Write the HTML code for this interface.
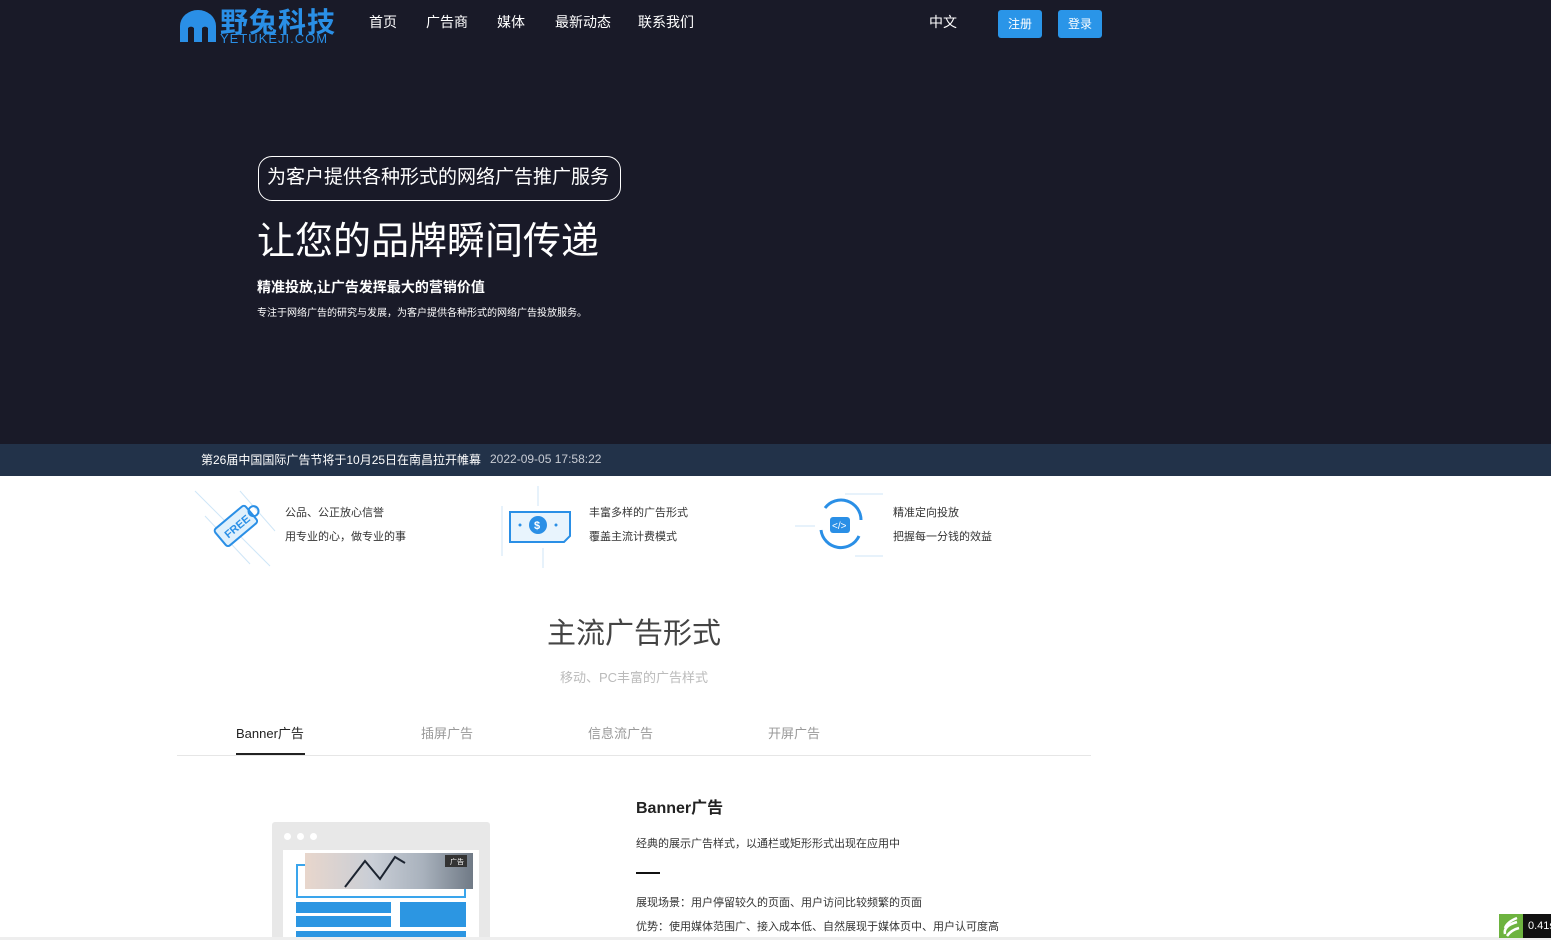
<!DOCTYPE html>
<html><head><meta charset="utf-8">
<style>
*{margin:0;padding:0;box-sizing:border-box}
body{width:1551px;height:940px;overflow:hidden;background:#fff;font-family:"Liberation Sans","Noto Sans CJK SC",sans-serif;position:relative}
.hero{position:absolute;left:0;top:0;width:1551px;height:444px;background:#191a28}
.abs{position:absolute;white-space:nowrap}
.nav a{position:absolute;top:12px;color:#fff;font-size:14px;text-decoration:none}
.btn{position:absolute;top:10px;width:44px;height:28px;background:#2a95e8;border-radius:3px;color:#fff;font-size:12px;text-align:center;line-height:28px}
.ticker{position:absolute;left:0;top:444px;width:1551px;height:32px;background:#223249}
.ft{font-size:11px;color:#333}
</style></head><body>
<div class="hero">
  <svg class="abs" style="left:178px;top:6px" width="40" height="36" viewBox="0 0 40 36"><path d="M2 36 V20 A18 16 0 0 1 38 20 V36 H30 V22 A4 4 0 0 0 24 22 V36 H16 V22 A4 4 0 0 0 10 22 V36Z" fill="#2a8fe6"/></svg>
  <div class="abs" style="left:220px;top:1px;font-size:28px;color:#2a8fe6;font-weight:bold;letter-spacing:1px">野兔科技</div>
  <div class="abs" style="left:220px;top:32px;font-size:13px;color:#2a8fe6;letter-spacing:1px;height:11px;overflow:hidden;line-height:14px">YETUKEJI.COM</div>
  <div class="nav">
    <a style="left:369px">首页</a><a style="left:426px">广告商</a><a style="left:497px">媒体</a><a style="left:555px">最新动态</a><a style="left:638px">联系我们</a><a style="left:929px">中文</a>
  </div>
  <div class="btn" style="left:998px">注册</div>
  <div class="btn" style="left:1058px">登录</div>
  <div class="abs" style="left:258px;top:156px;width:363px;height:45px;border:1px solid #fff;border-radius:14px;color:#fff;font-size:19px;line-height:41px;padding-left:8px">为客户提供各种形式的网络广告推广服务</div>
  <div class="abs" style="left:257px;top:210px;color:#fff;font-size:38px">让您的品牌瞬间传递</div>
  <div class="abs" style="left:257px;top:277px;color:#fff;font-size:14px;font-weight:bold">精准投放,让广告发挥最大的营销价值</div>
  <div class="abs" style="left:257px;top:304px;color:#fff;font-size:10px">专注于网络广告的研究与发展，为客户提供各种形式的网络广告投放服务。</div>
</div>
<div class="ticker">
  <div class="abs" style="left:201px;top:7px;color:#fff;font-size:12px">第26届中国国际广告节将于10月25日在南昌拉开帷幕</div>
  <div class="abs" style="left:490px;top:8px;color:#c8ccd4;font-size:12px">2022-09-05 17:58:22</div>
</div>
<svg class="abs" style="left:190px;top:486px" width="90" height="82" viewBox="0 0 90 82">
  <g stroke="#cfe6f7" stroke-width="1"><line x1="5" y1="5" x2="80" y2="80"/><line x1="15" y1="30" x2="60" y2="78"/><line x1="50" y1="5" x2="85" y2="45"/></g>
  <g transform="rotate(-40 45 42)"><rect x="27" y="30" width="40" height="22" rx="3" fill="#dff0fc" stroke="#2a8fe6" stroke-width="2"/><text x="33" y="46" font-size="11" font-weight="bold" fill="#2a8fe6" font-family="Liberation Sans">FREE</text><circle cx="70" cy="41" r="5" fill="none" stroke="#2a8fe6" stroke-width="2"/></g>
</svg>
<div class="abs ft" style="left:285px;top:504px">公品、公正放心信誉</div>
<div class="abs ft" style="left:285px;top:528px">用专业的心，做专业的事</div>
<svg class="abs" style="left:498px;top:486px" width="80" height="82" viewBox="0 0 80 82">
  <g stroke="#cfe6f7"><line x1="40" y1="0" x2="40" y2="20"/><line x1="45" y1="62" x2="45" y2="82"/><line x1="4" y1="20" x2="4" y2="70"/></g>
  <path d="M12 26 H72 V50 L66 56 H12Z" fill="#e8f4fd" stroke="#2a8fe6" stroke-width="2"/>
  <circle cx="40" cy="39" r="9" fill="#2a8fe6"/><text x="36" y="43" font-size="11" fill="#fff" font-weight="bold" font-family="Liberation Sans">$</text>
  <circle cx="22" cy="39" r="1.5" fill="#2a8fe6"/><circle cx="58" cy="39" r="1.5" fill="#2a8fe6"/>
</svg>
<div class="abs ft" style="left:589px;top:504px">丰富多样的广告形式</div>
<div class="abs ft" style="left:589px;top:528px">覆盖主流计费模式</div>
<svg class="abs" style="left:795px;top:486px" width="90" height="82" viewBox="0 0 90 82">
  <g stroke="#cfe6f7"><line x1="50" y1="8" x2="88" y2="8"/><line x1="0" y1="40" x2="20" y2="40"/><line x1="60" y1="70" x2="88" y2="70"/></g>
  <path d="M30 22 A20 20 0 0 1 66 34" fill="none" stroke="#2a8fe6" stroke-width="3"/>
  <path d="M64 50 A20 20 0 0 1 26 44" fill="none" stroke="#2a8fe6" stroke-width="3"/>
  <rect x="35" y="31" width="20" height="16" rx="3" fill="#2a8fe6"/><text x="37" y="43" font-size="10" fill="#fff" font-family="Liberation Sans">&lt;/&gt;</text>
</svg>
<div class="abs ft" style="left:893px;top:504px">精准定向投放</div>
<div class="abs ft" style="left:893px;top:528px">把握每一分钱的效益</div>
<div class="abs" style="left:547px;top:610px;font-size:29px;color:#444">主流广告形式</div>
<div class="abs" style="left:560px;top:667px;font-size:13px;color:#bbb">移动、PC丰富的广告样式</div>
<div class="abs" style="left:236px;top:723px;font-size:13px;color:#222">Banner广告</div>
<div class="abs" style="left:421px;top:723px;font-size:13px;color:#999">插屏广告</div>
<div class="abs" style="left:588px;top:723px;font-size:13px;color:#999">信息流广告</div>
<div class="abs" style="left:768px;top:723px;font-size:13px;color:#999">开屏广告</div>
<div class="abs" style="left:177px;top:755px;width:914px;height:1px;background:#e6e6e6"></div>
<div class="abs" style="left:236px;top:753px;width:69px;height:2px;background:#222"></div>
<div class="abs" style="left:272px;top:822px;width:218px;height:118px;background:#e8e8e8;border-radius:3px"></div>
<div class="abs" style="left:284px;top:833px;width:7px;height:7px;border-radius:50%;background:#fff"></div>
<div class="abs" style="left:297px;top:833px;width:7px;height:7px;border-radius:50%;background:#fff"></div>
<div class="abs" style="left:310px;top:833px;width:7px;height:7px;border-radius:50%;background:#fff"></div>
<div class="abs" style="left:283px;top:850px;width:196px;height:90px;background:#fff"></div>
<div class="abs" style="left:296px;top:864px;width:170px;height:34px;border:2px solid #3aa5ec"></div>
<div class="abs" style="left:305px;top:853px;width:168px;height:36px;background:linear-gradient(90deg,#e8d6cc,#c9ced6 40%,#a9b2bd 70%,#707a86)"></div>
<svg class="abs" style="left:305px;top:853px" width="168" height="36"><polyline points="40,34 60,8 75,26 90,4 100,10" fill="none" stroke="#1c2430" stroke-width="2"/><rect x="140" y="2" width="22" height="12" fill="#333"/><text x="145" y="11" font-size="7" fill="#fff" font-family="Noto Sans CJK SC">广告</text></svg>
<div class="abs" style="left:296px;top:902px;width:95px;height:11px;background:#2c96e2"></div>
<div class="abs" style="left:296px;top:916px;width:95px;height:11px;background:#2c96e2"></div>
<div class="abs" style="left:400px;top:902px;width:66px;height:25px;background:#2c96e2"></div>
<div class="abs" style="left:296px;top:931px;width:170px;height:9px;background:#2c96e2"></div>
<div class="abs" style="left:636px;top:794px;font-size:16px;font-weight:bold;color:#222">Banner广告</div>
<div class="abs" style="left:636px;top:835px;font-size:11px;color:#333">经典的展示广告样式，以通栏或矩形形式出现在应用中</div>
<div class="abs" style="left:636px;top:872px;width:24px;height:2px;background:#111"></div>
<div class="abs" style="left:636px;top:894px;font-size:11px;color:#333">展现场景：用户停留较久的页面、用户访问比较频繁的页面</div>
<div class="abs" style="left:636px;top:918px;font-size:11px;color:#333">优势：使用媒体范围广、接入成本低、自然展现于媒体页中、用户认可度高</div>
<div class="abs" style="left:0;top:937px;width:1551px;height:3px;background:#eee"></div>
<div class="abs" style="left:1499px;top:914px;width:24px;height:24px;background:#6db33f"></div>
<svg class="abs" style="left:1499px;top:914px" width="24" height="24"><path d="M6 20 Q4 12 18 8 M6 14 Q8 8 18 4 M8 22 Q12 16 20 14" stroke="#fff" stroke-width="2.5" fill="none"/></svg>
<div class="abs" style="left:1523px;top:914px;width:28px;height:24px;background:#111;color:#fff;font-size:11px;line-height:24px;padding-left:5px;overflow:hidden">0.41s</div>
</body></html>
